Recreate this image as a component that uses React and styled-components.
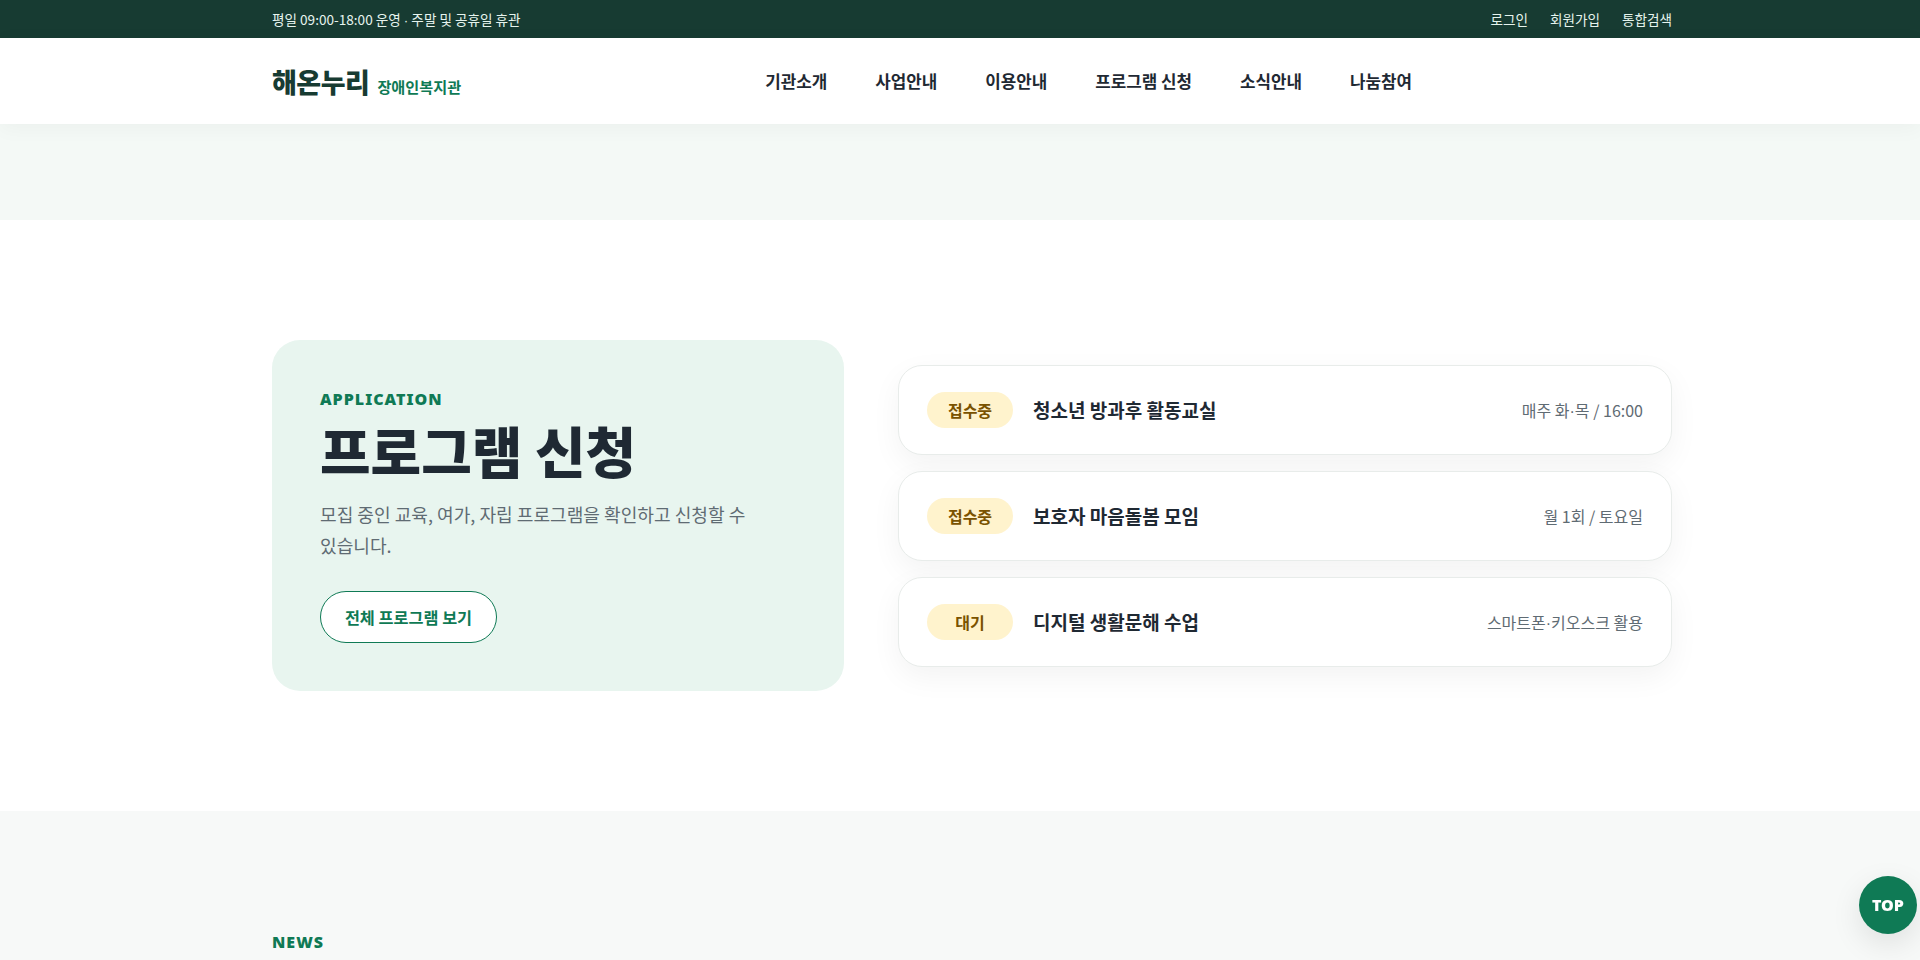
import React from "react";
import styled, { createGlobalStyle } from "styled-components";

const Global = createGlobalStyle`
  * { box-sizing: border-box; }
  html, body { margin: 0; padding: 0; background: #fff; }
  body {
    font-family: "Noto Sans CJK KR", "Noto Sans", sans-serif;
    color: #1f2933;
    overflow: hidden;
  }
`;

const Page = styled.div`
  height: 960px;
  overflow: hidden;
`;

const Container = styled.div`
  width: 1400px;
  margin-left: 272px;
`;

const TopBar = styled.div`
  background: #173b32;
  height: 38px;
  color: #e6f4ee;
  font-size: 13.6px;
`;

const TopInner = styled(Container)`
  height: 100%;
  display: flex;
  align-items: center;
  justify-content: space-between;
`;

const TopLinks = styled.nav`
  display: flex;
  gap: 22px;
`;

const TopLink = styled.a`
  color: inherit;
`;

const Header = styled.header`
  position: relative;
  background: #fff;
  height: 86px;
  box-shadow: 0 4px 20px rgba(0, 0, 0, 0.04);
`;

const HeaderInner = styled(Container)`
  height: 100%;
  display: flex;
  align-items: center;
`;

const Logo = styled.a`
  display: flex;
  align-items: baseline;
  gap: 8px;
  font-size: 27px;
  font-weight: 800;
  letter-spacing: -0.5px;
  color: #173b32;
`;

const LogoSub = styled.span`
  font-size: 15.2px;
  font-weight: 700;
  letter-spacing: 0;
  color: #0f7a55;
`;

const Nav = styled.nav`
  display: flex;
  gap: 48px;
  margin-left: 304px;
  margin-top: -2px;
  font-size: 16.85px;
  font-weight: 700;
  color: #1f2933;
`;

const Band = styled.div`
  height: 96px;
  background: #f4f9f6;
`;

const Section = styled.section`
  padding: 120px 0;
  background: #fff;
`;

const Grid = styled(Container)`
  display: grid;
  grid-template-columns: 572px 1fr;
  gap: 54px;
  align-items: center;
`;

const Panel = styled.div`
  background: #e8f5ef;
  border-radius: 28px;
  padding: 48px;
`;

const Eyebrow = styled.p`
  margin: 0;
  font-family: "Noto Sans", sans-serif;
  font-size: 16px;
  font-weight: 900;
  letter-spacing: 1px;
  line-height: 22px;
  color: #0f7a55;
`;

const Title = styled.h2`
  margin: 0 0 11px;
  font-size: 55px;
  font-weight: 800;
  line-height: 78px;
  color: #1f2933;
`;

const Lead = styled.p`
  margin: 0 0 30px;
  max-width: 440px;
  font-size: 18.1px;
  line-height: 31px;
  color: #5f6b73;
`;

const OutlineButton = styled.a`
  display: inline-flex;
  align-items: center;
  justify-content: center;
  width: 177px;
  height: 52px;
  border: 1px solid #0f7a55;
  border-radius: 26px;
  background: #fff;
  color: #0f7a55;
  font-size: 16.3px;
  font-weight: 700;
`;

const List = styled.ul`
  list-style: none;
  margin: 0;
  padding: 0;
  display: flex;
  flex-direction: column;
  gap: 16px;
`;

const Row = styled.li`
  display: flex;
  align-items: center;
  height: 90px;
  padding: 0 28px;
  background: #fff;
  border: 1px solid #e8ecea;
  border-radius: 24px;
  box-shadow: 0 10px 30px rgba(0, 0, 0, 0.05);
`;

const Badge = styled.span`
  display: flex;
  align-items: center;
  justify-content: center;
  width: 86px;
  height: 36px;
  border-radius: 18px;
  background: #fff3cd;
  color: #7a5200;
  font-size: 16px;
  font-weight: 700;
`;

const RowTitle = styled.strong`
  margin-left: 20px;
  font-size: 19px;
  font-weight: 700;
  color: #1f2933;
`;

const RowMeta = styled.span`
  margin-left: auto;
  font-size: 16px;
  color: #5f6b73;
`;

const NarrowDot = styled.span`
  font-family: "Liberation Sans", sans-serif;
`;

const NewsSection = styled.section`
  padding: 120px 0 0;
  background: #f7f9f8;
  height: 150px;
`;

const TopButton = styled.a`
  position: fixed;
  right: 3px;
  bottom: 26px;
  width: 58px;
  height: 58px;
  border-radius: 50%;
  background: #0f7a55;
  color: #fff;
  display: flex;
  align-items: center;
  justify-content: center;
  font-family: "Noto Sans", sans-serif;
  font-size: 16px;
  font-weight: 900;
  box-shadow: 0 10px 30px rgba(0, 0, 0, 0.1);
`;

const navItems = ["기관소개", "사업안내", "이용안내", "프로그램 신청", "소식안내", "나눔참여"];
const rows = [
  { status: "접수중", title: "청소년 방과후 활동교실", meta: ["매주 화", "목 / 16:00"] },
  { status: "접수중", title: "보호자 마음돌봄 모임", meta: ["월 1회 / 토요일"] },
  { status: "대기", title: "디지털 생활문해 수업", meta: ["스마트폰", "키오스크 활용"] },
];

export default function App() {
  return (
    <Page>
      <Global />
      <TopBar>
        <TopInner>
          <span>
            평일 09:00-18:00 운영 <NarrowDot>·</NarrowDot> 주말 및 공휴일 휴관
          </span>
          <TopLinks>
            <TopLink>로그인</TopLink>
            <TopLink>회원가입</TopLink>
            <TopLink>통합검색</TopLink>
          </TopLinks>
        </TopInner>
      </TopBar>
      <Header>
        <HeaderInner>
          <Logo>
            해온누리<LogoSub>장애인복지관</LogoSub>
          </Logo>
          <Nav>
            {navItems.map((n) => (
              <a key={n}>{n}</a>
            ))}
          </Nav>
        </HeaderInner>
      </Header>
      <Band />
      <Section>
        <Grid>
          <Panel>
            <Eyebrow>APPLICATION</Eyebrow>
            <Title>프로그램 신청</Title>
            <Lead>모집 중인 교육, 여가, 자립 프로그램을 확인하고 신청할 수 있습니다.</Lead>
            <OutlineButton>전체 프로그램 보기</OutlineButton>
          </Panel>
          <List>
            {rows.map((r) => (
              <Row key={r.title}>
                <Badge>{r.status}</Badge>
                <RowTitle>{r.title}</RowTitle>
                <RowMeta>
                  {r.meta[0]}
                  {r.meta[1] && (
                    <>
                      <NarrowDot>·</NarrowDot>
                      {r.meta[1]}
                    </>
                  )}
                </RowMeta>
              </Row>
            ))}
          </List>
        </Grid>
      </Section>
      <NewsSection>
        <Container>
          <Eyebrow>NEWS</Eyebrow>
        </Container>
      </NewsSection>
      <TopButton>TOP</TopButton>
    </Page>
  );
}
